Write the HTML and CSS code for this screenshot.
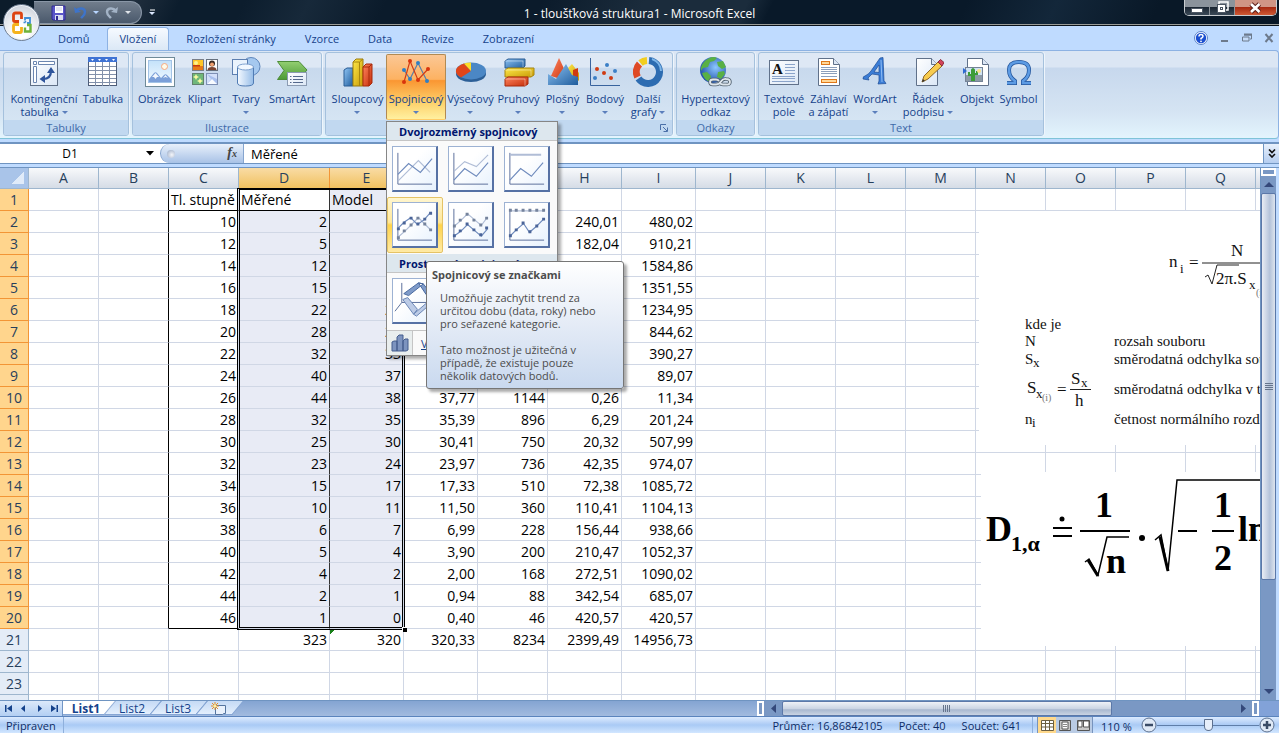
FILE: index.html
```html
<!DOCTYPE html>
<html lang="cs">
<head>
<meta charset="utf-8">
<title>1 - tloušťková struktura1 - Microsoft Excel</title>
<link rel="stylesheet" href="styles.css">
</head>
<body>
<svg class="defs" width="0" height="0" aria-hidden="true">
  <defs>
    <linearGradient id="blue" x1="0" y1="0" x2="1" y2="1"><stop offset="0" stop-color="#8fc4f4"/><stop offset="1" stop-color="#1f5c9c"/></linearGradient>
    <linearGradient id="red" x1="0" y1="0" x2="1" y2="1"><stop offset="0" stop-color="#ff8560"/><stop offset="1" stop-color="#c42c08"/></linearGradient>
    <linearGradient id="yellow" x1="0" y1="0" x2="1" y2="1"><stop offset="0" stop-color="#ffe94a"/><stop offset="1" stop-color="#c79a06"/></linearGradient>
    <linearGradient id="green" x1="0" y1="0" x2="0" y2="1"><stop offset="0" stop-color="#93cf72"/><stop offset="1" stop-color="#4c9a35"/></linearGradient>
    <linearGradient id="sky" x1="0" y1="0" x2="0" y2="1"><stop offset="0" stop-color="#c4e2fa"/><stop offset="1" stop-color="#f1f9ff"/></linearGradient>
    <linearGradient id="paper" x1="0" y1="0" x2="1" y2="1"><stop offset="0" stop-color="#ffffff"/><stop offset="1" stop-color="#dbe7f6"/></linearGradient>
    <linearGradient id="glass" x1="0" y1="0" x2="1" y2="0"><stop offset="0" stop-color="#f4f9ff"/><stop offset="1" stop-color="#96bde8"/></linearGradient>
    <radialGradient id="globe" cx=".6" cy=".4" r=".7"><stop offset="0" stop-color="#8cc8ff"/><stop offset="1" stop-color="#1442a0"/></radialGradient>
  </defs>
</svg>
<div class="app">
  <header class="titlebar">
    <div class="qat">
      <button class="qbtn" aria-label="Uložit"><svg width="16" height="16" viewBox="0 0 16 16"><path d="M1 1h13v14H2l-1-1z" fill="#5a55c8" stroke="#302b93"/><rect x="4" y="1" width="8" height="7" fill="#fff"/><path d="M5 3h6M5 5h6" stroke="#c7cbe6"/><rect x="4" y="10" width="8" height="5" fill="#d9dcf0"/><rect x="5" y="11" width="2" height="4" fill="#302b93"/></svg></button>
      <button class="qbtn" aria-label="Zpět"><svg width="14" height="14" viewBox="0 0 14 14"><path d="M1 1l1 6 6-1z" fill="#3e74c9"/><path d="M3 5c3-4 9-3 9 1 0 3-2 4-4 6" fill="none" stroke="#3e74c9" stroke-width="2.400"/></svg></button>
      <button class="qarrow" aria-label="Seznam kroků zpět"><svg width="6" height="5" viewBox="0 0 6 5"><path d="M0 1h6L3 4z" fill="#b8d6ff"/></svg></button>
      <button class="qbtn" aria-label="Znovu"><svg width="14" height="14" viewBox="0 0 14 14"><path d="M13 1l-1 6-6-1z" fill="#a3b3c6"/><path d="M11 5C8 1 2 2 2 6c0 3 2 4 4 6" fill="none" stroke="#a3b3c6" stroke-width="2.400"/></svg></button>
      <button class="qarrow" aria-label="Seznam kroků znovu"><svg width="6" height="5" viewBox="0 0 6 5"><path d="M0 1h6L3 4z" fill="#dfe4ea"/></svg></button>
    </div>
    <button class="qarrow qmore" aria-label="Přizpůsobit panel nástrojů"><svg width="7" height="7" viewBox="0 0 7 7"><path d="M1 1h5" stroke="#fff"/><path d="M0 3h6L3 6z" fill="#dce8ff"/></svg></button>
    <h1 class="title">1 - tloušťková struktura1 - Microsoft Excel</h1>
    <div class="winbtns">
      <button class="win" aria-label="Minimalizovat okno"><svg width="14" height="12" viewBox="0 0 14 12"><rect x="1.500" y="6.500" width="11" height="4" fill="#fff" stroke="#4c5663"/></svg></button>
      <button class="win" aria-label="Obnovit okno"><svg width="13" height="13" viewBox="0 0 13 13"><path d="M3 4V1h9v8H9" fill="none" stroke="#fff" stroke-width="1.500"/><rect x="1.500" y="3.500" width="8" height="8" fill="#fff" stroke="#4c5663"/><rect x="4.500" y="6.500" width="2" height="2" fill="#fff" stroke="#4c5663"/></svg></button>
      <button class="win win-close" aria-label="Zavřít okno"><svg width="13" height="12" viewBox="0 0 13 12"><path d="M2 2l8.500 8M10.500 2L2 10" stroke="#5a1d18" stroke-width="4.500"/><path d="M2 2l8.500 8M10.500 2L2 10" stroke="#fff" stroke-width="2.600"/></svg></button>
    </div>
  </header>
  <button class="office" aria-label="Tlačítko Office"><svg width="22" height="24" viewBox="0 0 22 24" fill="none"><path d="M10.500 8V3.500Q10.500 2 9 2H4.500Q2.500 2 2.500 4v5q0 1.500 1.500 1.500h4" stroke="#dd4412" stroke-width="2.800"/><path d="M14 9.500V7h5v5h-3" stroke="#3f8fd8" stroke-width="1.800"/><path d="M12.500 11.500h2M14.500 10v1.500" stroke="#3f8fd8" stroke-width="1.500"/><path d="M8 13.500H4q-1.500 0-1.500 1.500v4.500q0 2 2 2H9q1.500 0 1.500-1.500v-4" stroke="#f5b21c" stroke-width="2.800"/><path d="M16 14h3.500v6.500H14V16.500" stroke="#6eb33a" stroke-width="2.400"/></svg></button>

  <nav class="tabs">
    <button class="tab">Domů</button>
    <button class="tab active">Vložení</button>
    <button class="tab">Rozložení stránky</button>
    <button class="tab">Vzorce</button>
    <button class="tab">Data</button>
    <button class="tab">Revize</button>
    <button class="tab">Zobrazení</button>
    <span class="docbtns">
      <button aria-label="Nápověda"><svg width="14" height="14" viewBox="0 0 14 14"><circle cx="7" cy="7" r="6.500" fill="#fff" stroke="#5b83c9"/><circle cx="7" cy="7" r="5.200" fill="#1b4fd0"/><path d="M5 5.500Q5 3.500 7 3.500t2 1.800Q9 6.500 7 7.500v1" fill="none" stroke="#fff" stroke-width="1.500"/><circle cx="7" cy="10.300" r=".9" fill="#fff"/></svg></button>
      <button aria-label="Minimalizovat sešit"><svg width="10" height="10" viewBox="0 0 10 10"><path d="M1 8h7" stroke="#6d7a8c" stroke-width="2"/></svg></button>
      <button aria-label="Obnovit sešit"><svg width="10" height="10" viewBox="0 0 10 10"><path d="M2 2h7.500v4H8" fill="none" stroke="#6d7a8c"/><path d="M2 1.500h8" stroke="#6d7a8c" stroke-width="2"/><path d="M.5 4v4h6.500V4z" fill="#c5dbf8" stroke="#6d7a8c"/></svg></button>
      <button aria-label="Zavřít sešit"><svg width="10" height="10" viewBox="0 0 10 10"><path d="M1.500 1l7 8M8.500 1l-7 8" stroke="#6d7a8c" stroke-width="2"/></svg></button>
    </span>
  </nav>

  <section class="ribbon" aria-label="Vložení">
    <div class="group">
      <div class="cmds">
        <button class="cmd w74"><svg viewBox="0 0 32 32"><rect x="2.500" y="2.500" width="27" height="27" fill="url(#paper)" stroke="#5f6f86"/><path d="M5.500 5.500h3v3h-3zM10.500 5.500h16v3h-16zM5.500 10.500h3v16h-3z" fill="#fff" stroke="#6c86b0"/><path d="M15 23q8 0 8-8" fill="none" stroke="#2f559c" stroke-width="2.200"/><path d="M23 11l4 6h-8zM11.500 23l5.500-4v8z" fill="#2f559c"/></svg><span>Kontingenční<br>tabulka <i class="dd"></i></span></button>
        <button class="cmd w44"><svg viewBox="0 0 32 32"><rect x="1.500" y="1.500" width="28" height="28" fill="#fff" stroke="#4e5d78"/><rect x="1" y="1" width="29" height="5" fill="#3f73d4"/><path d="M4 3h3L5.500 5zM11 3h3l-1.500 2zM18 3h3l-1.500 2zM25 3h3l-1.500 2z" fill="#fff"/><path d="M2 10.500h27M2 14.500h27M2 18.500h27M2 22.500h27M2 26.500h27M8.500 6v24M15.500 6v24M22.500 6v24" stroke="#8291ab"/></svg><span>Tabulka</span></button>
      </div>
      <div class="caption">Tabulky</div>
    </div>
    <div class="group">
      <div class="cmds">
        <button class="cmd w47"><svg viewBox="0 0 32 32"><rect x="1.500" y="1.500" width="29" height="29" fill="#fff" stroke="#6f8a98"/><rect x="4.500" y="4.500" width="23" height="22" fill="url(#sky)" stroke="#a3c3e6"/><circle cx="20.500" cy="10.500" r="3" fill="#fffbe8" stroke="#f5a880"/><path d="M5 26v-3l5-6q1.500-1.500 3 0l4 5 3-3q1.500-1.500 3 0l4 4v3z" fill="#7b9fd8"/><path d="M8 21l3.500-4 3.500 4-2 0-1.500 2-1.500-2zM19 22l2.500-3 2.500 3-2.500-1z" fill="#f4f8fd"/></svg><span>Obrázek</span></button>
        <button class="cmd w43"><svg viewBox="0 0 32 32"><rect x="3.500" y="3.500" width="11" height="11" fill="#ffc629" stroke="#7b7f88"/><path d="M4 10h10v4H4z" fill="#e87a18"/><path d="M4 9h7v1.500H4z" fill="#c63a10"/><circle cx="7" cy="7" r="2" fill="#fff38a"/><rect x="17.500" y="3.500" width="11" height="11" fill="#fff" stroke="#66707e"/><circle cx="23" cy="7.500" r="3" fill="#3b2a22"/><circle cx="23" cy="8.500" r="2" fill="#f0a070"/><path d="M18.500 14q0-3 4.500-3t4.500 3z" fill="#7a4330"/><rect x="3.500" y="17.500" width="11" height="11" fill="#6fb77a" stroke="#62806c"/><path d="M7 18l1 2 2 1-2 1-1 2-1-2-2-1 2-1zM11 22l1 2 2 1-2 1-1 2-1-2-2-1 2-1z" fill="#f8faa0"/><rect x="17.500" y="17.500" width="11" height="11" fill="#d3e0fa" stroke="#7d8fb4"/><path d="M18 18l10 5v5H18l4-5z" fill="#a9c0ee"/><path d="M18 28l5-5 5 5z" fill="#f8fbff"/></svg><span>Klipart</span></button>
        <button class="cmd w40"><svg viewBox="0 0 32 32"><circle cx="21" cy="10.500" r="9" fill="#a5c8ef" stroke="#5e86bb"/><rect x="2.500" y="3.500" width="15" height="15" fill="#eaf3fd" stroke="#5e7fb0"/><path d="M7.500 11v16q0 3 8 3t8-3V11z" fill="url(#glass)" stroke="#517cb4"/><ellipse cx="15.500" cy="11" rx="8" ry="3" fill="#f2f8ff" stroke="#7fa2d0"/></svg><span>Tvary<br><i class="dd"></i></span></button>
        <button class="cmd w52"><svg viewBox="0 0 32 32"><path d="M1.500 5.500H23l8 8.500-8 9.500H1.500L8 14.500z" fill="url(#green)" stroke="#4d8c38"/><rect x="11.500" y="16.500" width="19" height="13" fill="url(#paper)" stroke="#8b9bb2"/><path d="M14 20.500h1.500M17 20.500h10M14 23.500h1.500M17 23.500h10M14 26.500h1.500M17 26.500h10" stroke="#55698c"/></svg><span>SmartArt</span></button>
      </div>
      <div class="caption">Ilustrace</div>
    </div>
    <div class="group">
      <div class="cmds">
        <button class="cmd w57"><svg viewBox="0 0 32 32"><path d="M2 14l3-2h6v18H2z" fill="url(#blue)" stroke="#2a5c94"/><path d="M11 6l3-3h7v27h-10z" fill="url(#yellow)" stroke="#9b7b0c"/><path d="M11 6h6.500V30M17.500 6L21 3" fill="none" stroke="#a8860e"/><path d="M21 11l3-3h6v19l-3 3h-6z" fill="url(#red)" stroke="#a82a0c"/><path d="M21 11h6v19M27 11l3-3" fill="none" stroke="#a82a0c"/></svg><span>Sloupcový<br><i class="dd"></i></span></button>
        <button class="cmd w60 open"><svg viewBox="0 0 32 32"><path d="M4 14l6 9 8-16 9 18" fill="none" stroke="#5a7fa8" stroke-width="1.200"/><path d="M4 26l6-21 8 19 10-11" fill="none" stroke="#d23c14" stroke-width="1.200"/><g fill="#2f7fc4"><circle cx="4" cy="14" r="2"/><circle cx="10" cy="23" r="2"/><circle cx="18" cy="7" r="2"/><circle cx="27" cy="25" r="2"/></g><g fill="#d8350c"><circle cx="4" cy="26" r="2"/><circle cx="10" cy="5" r="2"/><circle cx="18" cy="24" r="2"/><circle cx="28" cy="13" r="2"/></g></svg><span>Spojnicový<br><i class="dd"></i></span></button>
        <button class="cmd w49"><svg viewBox="0 0 32 32"><ellipse cx="16" cy="18" rx="15" ry="8" fill="#2c5f97"/><ellipse cx="16" cy="15" rx="15" ry="8.500" fill="#4b87c5"/><path d="M16 15L6 21.500Q0 18 1 14q1-4 8-6.500z" fill="#e0451a"/><path d="M16 15L9 7.500q3-1 7-1z" fill="#ffdd28"/></svg><span>Výsečový<br><i class="dd"></i></span></button>
        <button class="cmd w47"><svg viewBox="0 0 32 32"><path d="M2 5l3-2h17v7l-2 2H2z" fill="url(#blue)" stroke="#2a5c94"/><path d="M2 14l3-2h26v7l-3 2H2z" fill="url(#yellow)" stroke="#a8860e"/><path d="M2 23l3-2h20v7l-3 2H2z" fill="url(#red)" stroke="#a82a0c"/><path d="M2 5h18v6M2 14h26v6M2 23h20v7" fill="none" stroke="#fff" stroke-opacity=".4"/></svg><span>Pruhový<br><i class="dd"></i></span></button>
        <button class="cmd w41"><svg viewBox="0 0 32 32"><path d="M4 20L12 2l8 17v6z" fill="url(#red)"/><path d="M19 14l6-6 7 9v8z" fill="url(#yellow)"/><path d="M26 14l5-2v15l-5-4z" fill="#cf3a10"/><path d="M1 18l8 5 10-15 6 11 6 2v8H1z" fill="url(#blue)"/></svg><span>Plošný<br><i class="dd"></i></span></button>
        <button class="cmd w44"><svg viewBox="0 0 32 32"><path d="M1.500 2v27.500H31" fill="none" stroke="#38639e"/><g fill="#cf3b14"><circle cx="8" cy="13" r="2"/><circle cx="15" cy="17" r="2"/><circle cx="22" cy="22" r="2"/></g><g fill="#3b7fc6"><circle cx="6" cy="22" r="2"/><circle cx="18" cy="9" r="2"/><circle cx="26" cy="15" r="2"/></g></svg><span>Bodový<br><i class="dd"></i></span></button>
        <button class="cmd w42"><svg viewBox="0 0 32 32" fill="none" stroke-width="7"><path d="M17 4.500a11.500 11.500 0 1 1-10.500 18" stroke="#2d6cb1"/><path d="M5.500 21A11.500 11.500 0 0 1 7.500 8" stroke="#df4a25"/><path d="M8.500 7a11.500 11.500 0 0 1 6.500-2.500" stroke="#f2ce20"/><path d="M20 3a13 13 0 0 1 9 12" stroke="#7db5e8" stroke-width="2"/></svg><span>Další<br>grafy <i class="dd"></i></span></button>
      </div>
      <div class="caption"><button class="launcher" aria-label="Vložit graf"><svg width="8" height="8" viewBox="0 0 8 8"><path d="M.5 6V.5H6M3 3l4 4M7.500 3.500v4h-4" fill="none" stroke="#4a6fa8"/></svg></button></div>
    </div>
    <div class="group">
      <div class="cmds">
        <button class="cmd w71"><svg viewBox="0 0 32 32"><circle cx="13" cy="14" r="13" fill="url(#globe)"/><path d="M5 5q7-6 12-3l-3 3-4 1-2 5-5 1-2 3q-1-5 4-10zM17 6l6-1 3 6-4 2-4-3zM2 17l5-1 4 4-1 6q-6-2-8-9zM18 16l6-1 1 3-4 5-4-2z" fill="#59b045"/><g fill="none" stroke="#51606e" stroke-width="3.500"><path d="M19 25q-1-1.500-3-1.500h-3q-3 0-3 2.500t3 2.500h3q3 0 5-3t5-2.500q4 0 4 3t-4 2.500h-3q-2 0-3-1.500"/></g><path d="M19 25q-1-1.500-3-1.500h-3q-3 0-3 2.500t3 2.500h3q3 0 5-3t5-2.500q4 0 4 3t-4 2.500h-3q-2 0-3-1.500" fill="none" stroke="#dde5ec" stroke-width="1.800"/></svg><span>Hypertextový<br>odkaz</span></button>
      </div>
      <div class="caption">Odkazy</div>
    </div>
    <div class="group">
      <div class="cmds">
        <button class="cmd w44"><svg viewBox="0 0 32 32"><rect x="1.500" y="4.500" width="29" height="24" fill="url(#paper)" stroke="#60718a"/><text x="4" y="18" class="serif-a">A</text><path d="M17 8.500h10M17 11.500h10M17 14.500h10M17 17.500h10M4 20.500h23M4 22.500h23M4 25.500h23" stroke="#8ba4ca"/></svg><span>Textové<br>pole</span></button>
        <button class="cmd w45"><svg viewBox="0 0 32 32"><path d="M5.500 2.500h15l6 6v21h-21z" fill="#fff" stroke="#60718a"/><path d="M20.500 2.500v6h6" fill="#dbe6f5" stroke="#60718a"/><rect x="8.500" y="5.500" width="8" height="3" fill="#ffd798" stroke="#df781a"/><rect x="8.500" y="23.500" width="15" height="3" fill="#ffd798" stroke="#df781a"/><path d="M8 11.500h16M8 13.500h16M8 15.500h16M8 17.500h16M8 20.500h16" stroke="#8c9fbc"/></svg><span>Záhlaví<br>a zápatí</span></button>
        <button class="cmd w48"><svg viewBox="0 0 32 32"><path d="M21 2l3-.5 1 23 2 3-8 .5 1-3v-6l-7-1-4 4 1 2-6-1q0-3 2-3 4-2 6-5zM20 9l-5 7 5 .5z" fill="#3b7dd6" fill-rule="evenodd" stroke="#1d4c95" stroke-width=".7"/><path d="M22 4l1 22" stroke="#8dbcf5" fill="none"/></svg><span>WordArt<br><i class="dd"></i></span></button>
        <button class="cmd w58"><svg viewBox="0 0 32 32"><path d="M4.500 2.500h15l6 6v21h-21z" fill="url(#paper)" stroke="#60718a"/><path d="M19.500 2.500v6h6" fill="#dbe6f5" stroke="#60718a"/><path d="M10 26l2-6L26 6l4 4-14 13z" fill="#f7cb4f" stroke="#8e6524"/><path d="M26 6l2.500-2.500 3.500 3L30 10z" fill="#d2435a" stroke="#8c2a3a"/><path d="M10 26l1-3 2 2z" fill="#333"/></svg><span>Řádek<br>podpisu <i class="dd"></i></span></button>
        <button class="cmd w40"><svg viewBox="0 0 32 32"><path d="M6.500 2.500h15l6 6v21h-21z" fill="#fff" stroke="#60718a"/><path d="M21.500 2.500v6h6" fill="#dbe6f5" stroke="#60718a"/><rect x="4.500" y="11.500" width="17" height="14" fill="#d0e2f2" stroke="#758397"/><path d="M5 19h16v6H5z" fill="#8c9aa6"/><path d="M11 25V14q1-2 2 0v11M8 16v3h3M16 15v3h-3" fill="none" stroke="#3c9c38" stroke-width="2"/><circle cx="18" cy="15" r="2" fill="#f8e28a"/><path d="M2 12l4 3-4 3z" fill="#2e6ad2"/></svg><span>Objekt</span></button>
        <button class="cmd w43"><svg viewBox="0 0 32 32"><path d="M4 27h8v-2Q6 21 6 14 6 6 16 6t10 8q0 7-6 11v2h8" fill="none" stroke="#24569d" stroke-width="4"/><path d="M4 27h8v-2Q6 21 6 14 6 6 16 6t10 8q0 7-6 11v2h8" fill="none" stroke="#5c9be4" stroke-width="2.500"/></svg><span>Symbol</span></button>
      </div>
      <div class="caption">Text</div>
    </div>
  </section>

  <div class="formulabar">
    <input class="namebox" aria-label="Pole názvů" value="D1">
    <button class="namedrop" aria-label="Seznam názvů"><svg width="8" height="5" viewBox="0 0 8 5"><path d="M0 0h8L4 4.500z" fill="#000"/></svg></button>
    <div class="fxarea"><i class="knob"></i><button class="fx" aria-label="Vložit funkci">f<small>x</small></button></div>
    <input class="formula" aria-label="Řádek vzorců" value="Měřené">
    <button class="expand" aria-label="Rozbalit řádek vzorců"><svg width="8" height="9" viewBox="0 0 8 9"><path d="M1 .5l3 3 3-3M1 5l3 3 3-3" fill="none" stroke="#111" stroke-width="1.600"/></svg></button>
  </div>

  <main class="work">
    <div class="sheet">
      <table class="grid">
        <colgroup><col class="c29"><col class="c70" span="3"><col class="c91"><col class="c74" span="2"><col class="c70"><col class="c74" span="2"><col class="c70" span="9"></colgroup>
        <thead><tr><th class="corner"><th>A<th>B<th>C<th class="on">D<th class="on">E<th>F<th>G<th>H<th>I<th>J<th>K<th>L<th>M<th>N<th>O<th>P<th>Q<th></tr></thead>
        <tbody class="selrows">
          <tr class="names"><th>1<td><td><td>Tl. stupně<td>Měřené<td>Model<td><td><td><td><td><td><td><td><td><td><td><td><td>
          <tr><th>2<td><td><td>10<td>2<td>4<td><td><td>240,01<td>480,02<td><td><td><td><td><td><td><td><td>
          <tr><th>3<td><td><td>12<td>5<td>6<td><td><td>182,04<td>910,21<td><td><td><td><td><td><td><td><td>
          <tr><th>4<td><td><td>14<td>12<td>10<td><td><td><td>1584,86<td><td><td><td><td><td><td><td><td>
          <tr><th>5<td><td><td>16<td>15<td>14<td><td><td><td>1351,55<td><td><td><td><td><td><td><td><td>
          <tr><th>6<td><td><td>18<td>22<td>20<td><td><td><td>1234,95<td><td><td><td><td><td><td><td><td>
          <tr><th>7<td><td><td>20<td>28<td>27<td><td><td><td>844,62<td><td><td><td><td><td><td><td><td>
          <tr><th>8<td><td><td>22<td>32<td>33<td><td><td><td>390,27<td><td><td><td><td><td><td><td><td>
          <tr><th>9<td><td><td>24<td>40<td>37<td><td><td><td>89,07<td><td><td><td><td><td><td><td><td>
          <tr><th>10<td><td><td>26<td>44<td>38<td>37,77<td>1144<td>0,26<td>11,34<td><td><td><td><td><td><td><td><td>
          <tr><th>11<td><td><td>28<td>32<td>35<td>35,39<td>896<td>6,29<td>201,24<td><td><td><td><td><td><td><td><td>
          <tr><th>12<td><td><td>30<td>25<td>30<td>30,41<td>750<td>20,32<td>507,99<td><td><td><td><td><td><td><td><td>
          <tr><th>13<td><td><td>32<td>23<td>24<td>23,97<td>736<td>42,35<td>974,07<td><td><td><td><td><td><td><td><td>
          <tr><th>14<td><td><td>34<td>15<td>17<td>17,33<td>510<td>72,38<td>1085,72<td><td><td><td><td><td><td><td><td>
          <tr><th>15<td><td><td>36<td>10<td>11<td>11,50<td>360<td>110,41<td>1104,13<td><td><td><td><td><td><td><td><td>
          <tr><th>16<td><td><td>38<td>6<td>7<td>6,99<td>228<td>156,44<td>938,66<td><td><td><td><td><td><td><td><td>
          <tr><th>17<td><td><td>40<td>5<td>4<td>3,90<td>200<td>210,47<td>1052,37<td><td><td><td><td><td><td><td><td>
          <tr><th>18<td><td><td>42<td>4<td>2<td>2,00<td>168<td>272,51<td>1090,02<td><td><td><td><td><td><td><td><td>
          <tr><th>19<td><td><td>44<td>2<td>1<td>0,94<td>88<td>342,54<td>685,07<td><td><td><td><td><td><td><td><td>
          <tr class="lastrow"><th>20<td><td><td>46<td>1<td>0<td>0,40<td>46<td>420,57<td>420,57<td><td><td><td><td><td><td><td><td>
        </tbody>
        <tbody>
          <tr><th>21<td><td><td><td>323<td class="flag">320<td>320,33<td>8234<td>2399,49<td>14956,73<td><td><td><td><td><td><td><td><td>
          <tr><th>22<td><td><td><td><td><td><td><td><td><td><td><td><td><td><td><td><td><td><td>
          <tr><th>23<td><td><td><td><td><td><td><td><td><td><td><td><td><td><td><td><td><td><td>
          <tr><th><td><td><td><td><td><td><td><td><td><td><td><td><td><td><td><td><td><td><td>
        </tbody>
      </table>
      <div class="selection"></div>
      <div class="handle"></div>
      <svg class="object obj1" width="340" height="234" viewBox="0 0 340 234">
        <rect width="340" height="234" fill="#fff"/>
        <g class="eq">
          <text x="190" y="56">n</text><text class="sub" x="201" y="62">i</text><text x="210" y="57">=</text>
          <path d="M223 52h117M226 66l3-2 4 9 5-19h22" fill="none" stroke="#222"/>
          <text x="252" y="45">N</text><text x="237" y="73">2π.S</text><text class="sub" x="270" y="78">x</text><text class="tiny" x="277" y="85">(i)</text>
        </g>
        <g class="legend">
          <text x="46" y="118">kde je</text><text x="46" y="135">N</text><text x="46" y="153">S</text><text class="sub" x="54" y="156">x</text>
          <text x="135" y="135">rozsah souboru</text><text x="135" y="153">směrodatná odchylka souboru</text><text x="135" y="183">směrodatná odchylka v třídě</text>
          <text x="46" y="213">n</text><text class="sub" x="53" y="216">i</text><text x="135" y="213">četnost normálního rozdělení</text>
        </g>
        <g class="eq">
          <text x="48" y="182">S</text><text class="sub" x="57" y="187">x</text><text class="tiny" x="63" y="190">(i)</text><text x="78" y="184">=</text>
          <path d="M91 178.500h21" stroke="#222"/><text x="92" y="173">S</text><text class="sub" x="102" y="176">x</text><text x="96" y="195">h</text>
        </g>
      </svg>
      <svg class="object obj2" width="340" height="174" viewBox="0 0 340 174">
        <rect width="340" height="174" fill="#fff"/>
        <g class="big">
          <text x="5" y="69">D</text><text class="bigsub" x="30" y="79">1,α</text>
          <path d="M72 56h19M72 64h19M99 59h50M197 59h19M231 59h22" stroke="#000" stroke-width="2"/>
          <circle cx="81" cy="47" r="2.500"/><circle cx="161" cy="66" r="3"/>
          <text x="114" y="45">1</text><text x="125" y="101">n</text>
          <path d="M104 90l4-3 9 16 9-38h22" fill="none" stroke="#000" stroke-width="1.500"/><path d="M107 88l10 16" stroke="#000" stroke-width="3"/>
          <path d="M174 68l6-5 7 36 9-91h144" fill="none" stroke="#000" stroke-width="1.500"/><path d="M179 65l8 34" stroke="#000" stroke-width="3"/>
          <text x="233" y="45">1</text><text x="233" y="98">2</text><text x="257" y="69">ln</text>
        </g>
      </svg>
    </div>
    <div class="vscroll">
      <i class="split"></i>
      <button class="arrow" aria-label="Nahoru"><svg width="10" height="5" viewBox="0 0 10 5"><path d="M0 5h10L5 0z" fill="#34487a"/></svg></button>
      <div class="track"><div class="thumb"></div></div>
      <button class="arrow" aria-label="Dolů"><svg width="10" height="5" viewBox="0 0 10 5"><path d="M0 0h10L5 5z" fill="#34487a"/></svg></button>
    </div>
  </main>

  <div class="bottom">
    <div class="sheetnav">
      <button aria-label="První list"><svg width="7" height="7" viewBox="0 0 7 7"><path d="M0 0h1.500v7H0zM7 0v7L2 3.500z" fill="#15428b"/></svg></button>
      <button aria-label="Předchozí list"><svg width="7" height="7" viewBox="0 0 7 7"><path d="M5 0v7L1 3.500z" fill="#15428b"/></svg></button>
      <button aria-label="Další list"><svg width="7" height="7" viewBox="0 0 7 7"><path d="M2 0v7l4-3.500z" fill="#15428b"/></svg></button>
      <button aria-label="Poslední list"><svg width="7" height="7" viewBox="0 0 7 7"><path d="M5.500 0H7v7H5.500zM0 0v7l5-3.500z" fill="#15428b"/></svg></button>
    </div>
    <div class="sheettabs">
      <button class="stab current">List1</button><button class="stab">List2</button><button class="stab">List3</button><button class="stab newtab" aria-label="Vložit list"><svg width="16" height="13" viewBox="0 0 16 13"><path d="M4.500 3.500h10v8h-2l-1 1h-7z" fill="#e9f1fc" stroke="#54749f"/><path d="M4 0v8M0 4h8M1 1l6 6M7 1L1 7" stroke="#e79022"/><circle cx="4" cy="4" r="1.500" fill="#fff0a0"/></svg></button>
    </div>
    <div class="hscroll">
      <i class="vsplit"></i>
      <button class="arrow" aria-label="Doleva"><svg width="5" height="9" viewBox="0 0 5 9"><path d="M5 0v9L0 4.500z" fill="#34487a"/></svg></button>
      <div class="track"><div class="thumb"></div></div>
      <button class="arrow" aria-label="Doprava"><svg width="5" height="9" viewBox="0 0 5 9"><path d="M0 0v9l5-4.500z" fill="#34487a"/></svg></button>
      <i class="vsplit"></i>
    </div>
  </div>

  <footer class="status">
    <span class="ready">Připraven</span>
    <span class="stats"><span>Průměr: 16,86842105</span><span>Počet: 40</span><span>Součet: 641</span></span>
    <span class="views">
      <button class="view chosen" aria-label="Normálně"><svg width="13" height="11" viewBox="0 0 13 11"><path d="M.5.500h12v10H.5zM.5 3.500h12M.5 7h12M4.500.500v10M8.500.500v10" fill="#fff" stroke="#6b5f42"/></svg></button>
      <button class="view" aria-label="Rozložení stránky"><svg width="12" height="11" viewBox="0 0 12 11"><path d="M.5.500h11v10H.5z" fill="#c8c8c8" stroke="#555"/><path d="M3 2h6v7H3z" fill="#fff" stroke="#555"/><path d="M4 4.500h4M4 6.500h4" stroke="#888"/></svg></button>
      <button class="view" aria-label="Konce stránek"><svg width="13" height="11" viewBox="0 0 13 11"><path d="M.5.500h12v10H.5z" fill="#c8c8c8" stroke="#555"/><path d="M1 1h4v6H1zM6.500 1H12v6H6.500z" fill="#fff" stroke="#555"/></svg></button>
    </span>
    <button class="zoomval">110 %</button>
    <button class="round" aria-label="Oddálit"><svg width="16" height="16" viewBox="0 0 16 16"><circle cx="8" cy="8" r="7" fill="#dfe9f6" stroke="#5c708f"/><path d="M4 8h8" stroke="#394b66" stroke-width="2.500"/></svg></button>
    <input class="zoom" type="range" min="0" max="100" value="50" aria-label="Lupa">
    <button class="round" aria-label="Přiblížit"><svg width="16" height="16" viewBox="0 0 16 16"><circle cx="8" cy="8" r="7" fill="#dfe9f6" stroke="#5c708f"/><path d="M4 8h8M8 4v8" stroke="#394b66" stroke-width="2.500"/></svg></button>
  </footer>

  <div class="menu">
    <h2>Dvojrozměrný spojnicový</h2>
    <div class="tiles">
      <button class="tile" aria-label="Spojnicový"><svg viewBox="0 0 44 44"><path d="M5 6v32h35" class="ax"/><path d="M5 35L26 14l12 12" class="l2"/><path d="M5 28l11-11 12 9 12-14" class="l1"/></svg></button>
      <button class="tile" aria-label="Skládaný spojnicový"><svg viewBox="0 0 44 44"><path d="M5 6v32h35" class="ax"/><path d="M5 25l11-10 12 5L40 8" class="l2"/><path d="M5 34l11-12 12 8 12-14" class="l1"/></svg></button>
      <button class="tile" aria-label="100% skládaný spojnicový"><svg viewBox="0 0 44 44"><path d="M5 6v32h35" class="ax"/><path d="M5 8h32" class="l2 thick"/><path d="M5 34l11-12 11 8 12-14" class="l1"/></svg></button>
      <button class="tile hot" aria-label="Spojnicový se značkami"><svg viewBox="0 0 44 44"><path d="M5 6v32h35" class="ax"/><path d="M5 35l7-6 7-7 7-7 6 6 6 6" class="l2"/><path d="M5 26l6-6 7-5 7 7 7-5 6-7" class="l1"/><path d="M4 34h3v3H4zM10 27h3v3h-3zM17 21h3v3h-3zM24 14h3v3h-3zM31 20h3v3h-3zM37 26h3v3h-3z" fill="#75839c"/><path d="M4 25h3v3H4zM10 19h3v3h-3zM17 14h3v3h-3zM24 20h3v3h-3zM31 15h3v3h-3zM37 9h3v3h-3z" fill="#4a6498"/></svg></button>
      <button class="tile" aria-label="Skládaný se značkami"><svg viewBox="0 0 44 44"><path d="M5 6v32h35" class="ax"/><path d="M5 24l7-6 7-7 7 6 7 6 6-8" class="l2"/><path d="M5 34l7-5 7-7 7 6 7 6 6-7" class="l1"/><path d="M4 22h3v3H4zM10 16h3v3h-3zM17 10h3v3h-3zM24 16h3v3h-3zM31 21h3v3h-3zM37 14h3v3h-3z" fill="#75839c"/><path d="M4 32h3v3H4zM10 27h3v3h-3zM17 20h3v3h-3zM24 26h3v3h-3zM31 31h3v3h-3zM37 24h3v3h-3z" fill="#4a6498"/></svg></button>
      <button class="tile" aria-label="100% skládaný se značkami"><svg viewBox="0 0 44 44"><path d="M5 6v32h35" class="ax"/><path d="M5 8h35" class="l2"/><path d="M5 34l7-7 7-6 6 9 7-6 7-7" class="l1"/><path d="M4 6h3v3H4zM10 6h3v3h-3zM17 6h3v3h-3zM24 6h3v3h-3zM31 6h3v3h-3zM38 6h3v3h-3z" fill="#75839c"/><path d="M4 32h3v3H4zM10 26h3v3h-3zM17 19h3v3h-3zM24 28h3v3h-3zM31 22h3v3h-3zM38 15h3v3h-3z" fill="#4a6498"/></svg></button>
    </div>
    <h2>Prostorový spojnicový</h2>
    <div class="tiles">
      <button class="tile" aria-label="Prostorový spojnicový"><svg viewBox="0 0 44 44"><path d="M9 4v20L2 33M9 24h31" class="ax"/><path d="M11 15L26 4l5 1-15 12zM26 4l8 12 5-1-8-10z" fill="#7f9bc9" stroke="#49689f"/><path d="M10 21l5-2 10 12-4 5zM21 36l14-12 4 1-15 13z" fill="#bccbe6" stroke="#6a86b6"/></svg></button>
    </div>
    <button class="alltypes"><span class="allicon"><svg width="18" height="18" viewBox="0 0 18 18"><path d="M1 8l2-1h3v10H1zM6 3l2-2h4v16H6zM12 7l2-2h3v11l-2 1h-3z" fill="#7d94bf" stroke="#445d8d"/></svg></span><span class="alltext"><u>V</u>šechny typy grafů...</span></button>
  </div>

  <div class="tooltip" role="tooltip">
    <strong>Spojnicový se značkami</strong>
    <p>Umožňuje zachytit trend za<br>určitou dobu (data, roky) nebo<br>pro seřazené kategorie.</p>
    <p>Tato možnost je užitečná v<br>případě, že existuje pouze<br>několik datových bodů.</p>
  </div>
</div>
</body>
</html>
```

FILE: styles.css
```css
* { box-sizing: border-box; }
html, body { height: 100%; margin: 0; }
body { font: 11px/13px "Open Sans", "Noto Sans", sans-serif; color: #15428b; overflow: hidden; }
button { font: inherit; color: inherit; border: 0; padding: 0; margin: 0; background: none; }
input { font: inherit; border: 0; padding: 0; margin: 0; border-radius: 0; outline: 0; }
svg { display: block; flex: none; }
.defs { position: absolute; }
.app { height: 100vh; display: flex; flex-direction: column; position: relative; background: #bfdbff; }

/* title bar */
.titlebar { flex: none; height: 26px; display: flex; align-items: flex-start; position: relative; color: #fff;
  border-bottom: 1px solid #0a121a; box-shadow: inset 0 -1px #9a9c98;
  background: linear-gradient(115deg, #0c1c2b 0 5%, #22303f 8% 10%, #0c1d2d 14% 19%, #17293a 24%, #0b1b2b 30% 42%, #1b2c3c 50% 58%, #091929 60% 75%, #13273a 82%, #091827 90%); }
.qat { margin-left: 34px; width: 108px; height: 23px; margin-top: 1px; padding: 0 8px 0 17px; display: flex; align-items: center; gap: 6px;
  border: 1px solid #8996a6; border-left: 0; border-radius: 0 12px 12px 0; background: linear-gradient(#717d8c, #4a596c); }
.qarrow { height: 24px; display: flex; align-items: center; }
.qmore { margin-left: 7px; }
.title { position: absolute; left: 0; right: 0; top: 6px; margin: 0; text-align: center; font-size: 12px; line-height: 15px; font-weight: 400; pointer-events: none; }
.winbtns { margin-left: auto; margin-right: 2px; height: 16px; display: flex; border: 1px solid #c8ccd0; border-top: 0; border-radius: 0 0 5px 5px; overflow: hidden; }
.win { width: 25px; display: flex; align-items: center; justify-content: center; border-right: 1px solid #8c939a; background: linear-gradient(#8b939c 0 45%, #1b2633 50%, #3b4957); }
.win-close { width: 41px; border-right: 0; background: linear-gradient(#d09585 0 45%, #a82a12 50%, #cf5a35); }
.office { position: absolute; left: 3px; top: 4px; width: 37px; height: 37px; border-radius: 50%; display: flex; align-items: center; justify-content: center; z-index: 2;
  background: radial-gradient(circle at 50% 75%, #fff 20%, #e6e9ee 55%, #bcc4d0); border: 1px solid #6f7e93; box-shadow: inset 0 0 0 1px #eef2f7; }

/* ribbon tabs */
.tabs { flex: none; height: 24px; display: flex; align-items: flex-end; gap: 5px; padding-left: 46px; background: #bfdbff; }
.tab { height: 23px; padding: 0 12px 1px; border: 1px solid transparent; border-width: 1px 0 0; font-size: 11px; }
.tab.active { border: 1px solid #8db2e3; border-bottom: 0; padding: 0 12px 1px; border-radius: 4px 4px 0 0; background: linear-gradient(#f6faff, #dbe8f6); }
.docbtns { margin-left: auto; height: 24px; padding-right: 5px; display: flex; align-items: center; gap: 12px; }

/* ribbon */
.ribbon { flex: none; height: 89px; display: flex; gap: 3px; padding: 1px 3px 2px; border: 1px solid #8db2e3; border-width: 1px 1px 1px 0; border-radius: 0 4px 4px 0;
  background: linear-gradient(#dbe6f4 0 18%, #c7d8ed 20%, #d5e4f3 70%, #e3f4fd); border-bottom-color: #7fc3d8; }
.group { display: flex; flex-direction: column; border: 1px solid #a5c1dd; border-radius: 3px; box-shadow: 1px 0 #eef5fc; overflow: hidden;
  background: linear-gradient(#dee8f5 0 17%, #c8d9ed 19%, #d9e8f5); }
.cmds { flex: 1; display: flex; padding: 0 3px; }
.cmd { height: 66px; margin-top: 1px; padding-top: 2px; display: flex; flex-direction: column; align-items: center; white-space: nowrap; border-radius: 2px; }
.cmd svg { width: 32px; height: 32px; }
.cmd span { margin-top: 4px; text-align: center; }
.dd { display: inline-block; vertical-align: 2px; border: 3px solid transparent; border-top-color: #5b7fbc; border-bottom: 0; }
.open { background: linear-gradient(#fbc795 0, #fdb262 38%, #fa9632 40%, #fdd26c 75%, #fff0a0); border: 1px solid #b28a52; border-bottom-color: #fc6; padding-top: 1px; }
.w40 { width: 40px; } .w41 { width: 41px; } .w42 { width: 42px; } .w43 { width: 43px; } .w44 { width: 44px; }
.w45 { width: 45px; } .w47 { width: 47px; } .w48 { width: 48px; } .w49 { width: 49px; } .w52 { width: 52px; }
.w57 { width: 57px; } .w58 { width: 58px; } .w60 { width: 60px; } .w71 { width: 71px; } .w74 { width: 74px; }
.caption { flex: none; height: 16px; line-height: 15px; text-align: center; color: #3e6aaa; background: #c1d8f0; }
.launcher { float: right; padding: 4px; }
.serif-a { font: bold 15px "Liberation Serif", serif; fill: #111; }

/* formula bar */
.formulabar { flex: none; height: 22px; margin-top: 3px; display: flex; color: #000; font-size: 12px; background: #fff; border-top: 2px solid #6f94c1; border-bottom: 1px solid #6f94c1; }
.namebox { width: 140px; text-align: center; }
.namedrop { width: 20px; display: flex; align-items: center; justify-content: center; }
.fxarea { width: 84px; display: flex; align-items: center; justify-content: space-between; padding: 0 6px; border: 1px solid #86a5cf; border-width: 0 1px; border-radius: 12px 0 0 12px; background: linear-gradient(#e8f0fb, #a8c2e6); }
.knob { width: 8px; height: 8px; border-radius: 50%; background: radial-gradient(circle at 60% 60%, #f4f6fa, #97a8c4); }
.fx { font: italic bold 14px/16px "Liberation Serif", serif; color: #444; }
.fx small { font-size: 10px; }
.formula { flex: 1; min-width: 0; padding-left: 7px; font-size: 13px; }
.expand { width: 16px; display: flex; align-items: center; justify-content: center; border-left: 1px solid #6f94c1; background: linear-gradient(#e9f1fc, #b4cdf0); }

/* worksheet */
.work { flex: 1; min-height: 0; margin-top: 3px; display: flex; border-top: 1px solid #6f94c1; }
.sheet { flex: 1; min-width: 0; position: relative; overflow: hidden; background: #fff; }
.grid { width: 1326px; table-layout: fixed; border-collapse: separate; border-spacing: 0; color: #000; font-size: 14px; line-height: 20px; }
.c29 { width: 29px; } .c70 { width: 70px; } .c74 { width: 74px; } .c91 { width: 91px; }
.grid th, .grid td { height: 22px; padding: 0 2px; border: 0 solid #d0d7e5; border-width: 0 1px 1px 0; white-space: nowrap; overflow: hidden; }
.grid td { text-align: right; }
.grid th { font-weight: 400; text-align: center; color: #273f5c; border-color: #9eb6ce; background: #e4ecf7; }
.grid thead th { height: 21px; background: linear-gradient(#f8f9fb, #d5dce6); }
.grid thead .corner { background: linear-gradient(135deg, transparent 50%, #e0ebf9 50%) 12px 4px / 12px 12px no-repeat, #a9c4e9; }
.grid thead .on { background: linear-gradient(#f9dca5, #f1c15f); border-color: #f29536; }
.grid .selrows th { background: #ffd58d; border-color: #f29536; }
.grid .names td { text-align: left; }
.selrows td:nth-child(3) { border-right-color: #000; }
.selrows td:nth-child(5), .selrows td:nth-child(6) { background: #e8ebf5; }
.selrows td:nth-child(5) { border-right-color: #333; }
.names td:nth-child(4), .names td:nth-child(5), .names td:nth-child(6), .lastrow td:nth-child(4) { border-bottom-color: #000; }
.selrows .names td:nth-child(5) { background: #fff; }
.grid .flag { background: linear-gradient(135deg, #188018 4px, transparent 4px); }
.selection { position: absolute; left: 237px; top: 20px; width: 168px; height: 442px; border: 3px double #000; border-top: 2px solid #000; }
.handle { position: absolute; left: 402px; top: 459px; width: 5px; height: 5px; background: #000; border: 1px solid #fff; border-width: 1px 0 0 1px; }
.object { position: absolute; }
.obj1 { left: 979px; top: 43px; }
.obj2 { left: 981px; top: 304px; }
.eq { font: 17px "Liberation Serif", serif; fill: #111; }
.legend { font: 15px "Liberation Serif", serif; fill: #111; }
.sub { font-size: 13px; }
.tiny { font-size: 10px; fill: #777; }
.big { font: bold 36px "Liberation Serif", serif; fill: #000; }
.bigsub { font-size: 22px; }

/* scroll bars */
.arrow { flex: none; display: flex; align-items: center; justify-content: center; }
.track { flex: 1; min-width: 0; min-height: 0; display: flex; }
.vscroll { flex: none; width: 19px; display: flex; flex-direction: column; border: 1px solid #6f94c1; border-width: 0 3px 0 1px; border-right-color: #bfdbff; background: #7a98c4; }
.split { flex: none; height: 8px; border: 2px solid #fff; background: #7a98c4; }
.vscroll .arrow { height: 17px; }
.vscroll .track { flex-direction: column; }
.vscroll .thumb { height: 79%; border: 1px solid #5b78a8; border-radius: 2px;
  background: repeating-linear-gradient(#66758c 0 1px, transparent 1px 2px) center / 8px 7px no-repeat, linear-gradient(90deg, #e9edf4, #b4c3da 60%, #dde4ee); }
.bottom { flex: none; height: 17px; display: flex; border-top: 1px solid #6f94c1; border-bottom: 1px solid #5b84bd; background: linear-gradient(#84a4d2, #a2bbdf); }
.sheetnav { width: 63px; padding-left: 1px; display: flex; align-items: center; justify-content: space-around; border-right: 1px solid #7195c5; background: linear-gradient(#dce9fa, #b3cff3); }
.sheettabs { flex: 1; display: flex; overflow: hidden; }
.stab { width: 46px; position: relative; z-index: 0; display: flex; align-items: center; justify-content: center; font-size: 12px; }
.stab::before { content: ""; position: absolute; z-index: -1; inset: 0 -1px 1px 0; transform: skewX(-40deg); border: 1px solid #86a6d4; border-top: 0; background: linear-gradient(#c5daf5, #e3effd); }
.stab.current { font-weight: 700; z-index: 1; }
.stab.current::before { left: -14px; background: #fff; }
.newtab { width: 36px; }
.hscroll { width: 522px; display: flex; background: #7a98c4; border-right: 20px solid #82a2d8; }
.vsplit { width: 7px; border: 2px solid #fff; background: #7a98c4; }
.hscroll .arrow { width: 18px; }
.hscroll .thumb { width: 73%; border: 1px solid #5b78a8; border-radius: 2px;
  background: repeating-linear-gradient(90deg, #66758c 0 1px, transparent 1px 2px) center / 7px 7px no-repeat, linear-gradient(#eef2f7, #cbd5e4 50%, #a9b9d0 60%, #c9d4e3); }

/* status bar */
.status { flex: none; height: 16px; padding-right: 4px; display: flex; align-items: center; color: #0d2c66; background: linear-gradient(#dcebff, #b4d0f6 40%, #a9caf5 50%, #d2e6ff); }
.ready { width: 64px; padding: 2px 0 0 6px; line-height: 14px; border-right: 1px solid #8fb0dc; }
.stats { margin-left: auto; padding: 2px 11px 0 0; display: flex; gap: 16px; line-height: 14px; border-right: 1px solid #8fb0dc; }
.views { margin: 0 8px 0 4px; display: flex; border: 1px solid #7793bd; border-width: 0 1px; background: #b9cbe4; }
.view { width: 18px; height: 16px; display: flex; align-items: center; justify-content: center; }
.view.chosen { background: #ffd98c; }
.zoomval { width: 40px; padding-top: 2px; text-align: left; }
.zoom { width: 102px; height: 16px; appearance: none; -webkit-appearance: none; background: linear-gradient(#5f7ea9, #5f7ea9) center / 100% 1px no-repeat; }
.zoom::-webkit-slider-thumb { -webkit-appearance: none; width: 9px; height: 12px; border: 1px solid #5c708f; border-radius: 1px 1px 5px 5px; background: #e6eefa; }
.round { flex: none; width: 16px; }

/* chart gallery */
.menu { position: absolute; left: 386px; top: 121px; width: 172px; z-index: 3; border: 1px solid #868686; background: #fafafa; box-shadow: 3px 3px 3px #0005; }
.menu h2 { margin: 0; height: 19px; padding-left: 12px; font-size: 11px; line-height: 19px; color: #00156e; background: #dde7ee; border-bottom: 1px solid #c5c5c5; }
.tiles { display: flex; flex-wrap: wrap; padding-bottom: 1px; }
.tile { width: 56px; height: 56px; padding: 4px; border: 1px solid transparent; border-radius: 2px; }
.tile svg { width: 46px; height: 46px; border: 1px solid #9db2d3; border-width: 1px 2px 2px 1px; border-right-color: #5671a4; border-bottom-color: #5671a4; background: linear-gradient(135deg, #fff 40%, #e6f1fd); }
.tile.hot { border-color: #e5c365; background: linear-gradient(#fff6cf, #ffe79a 45%, #ffd34a 50%, #ffeaa5); }
.ax { fill: none; stroke: #5a6f9b; }
.l1 { fill: none; stroke: #6f8bbd; stroke-width: 1.200; }
.l2 { fill: none; stroke: #b0bdd6; stroke-width: 1.200; }
.thick { stroke-width: 2; }
.alltypes { width: 100%; height: 25px; display: flex; align-items: center; border-top: 1px solid #c5c5c5; }
.allicon { width: 26px; height: 24px; display: flex; align-items: center; justify-content: center; background: #e9eeee; border-right: 1px solid #c5c5c5; }
.alltext { padding-left: 8px; color: #15428b; }

.tooltip { position: absolute; left: 426px; top: 261px; width: 198px; z-index: 4; padding: 6px 5px; color: #4c4c4c; border: 1px solid #767676; border-radius: 3px;
  background: linear-gradient(#fff, #e4ebf6 50%, #c9d9ef); box-shadow: 3px 3px 3px #0005; }
.tooltip strong { display: block; }
.tooltip p { margin: 10px 0 0 8px; white-space: nowrap; }
.tooltip p + p { margin-top: 13px; }
```
